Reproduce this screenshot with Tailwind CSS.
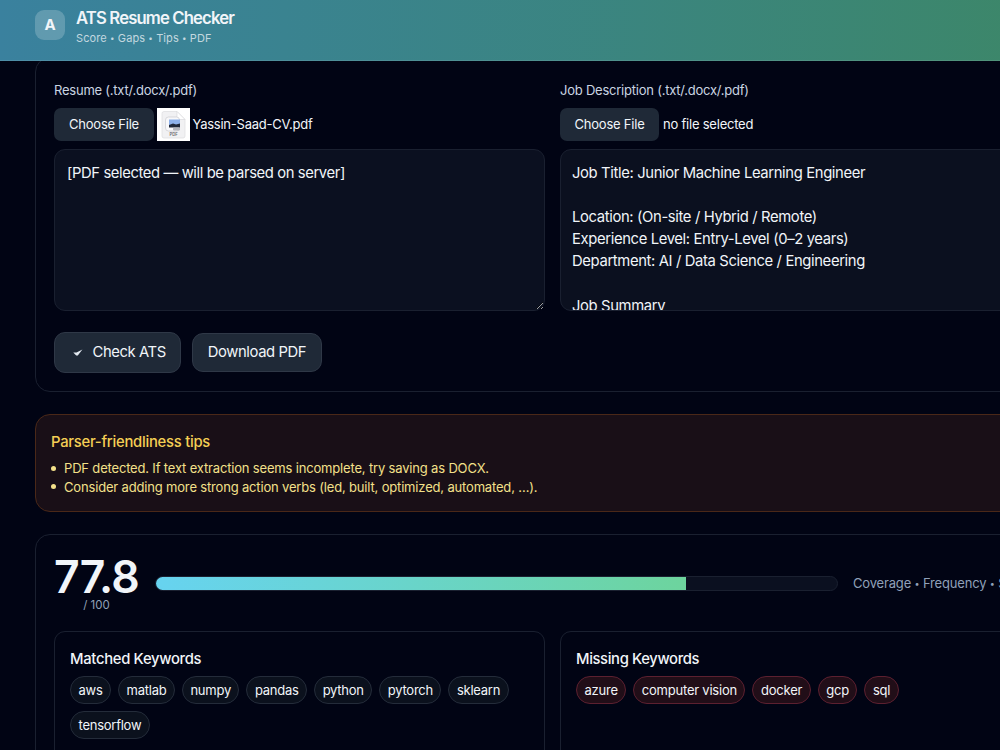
<!DOCTYPE html>
<html lang="en">
<head>
    <meta charset="UTF-8">
    <meta name="viewport" content="width=device-width, initial-scale=1.0">
    <title>ATS Resume Checker</title>
    <script src="https://cdn.jsdelivr.net/npm/@tailwindcss/browser@4"></script>
</head>
<body class="h-[750px] overflow-hidden bg-[#010414] font-['Inter','Liberation_Sans',sans-serif] text-slate-100">
    <!-- Header -->
    <header class="relative z-10 flex h-[61px] w-[1105px] items-start gap-[11px] border-b border-white/10 bg-linear-to-r from-[#3a819e] to-[#3d8765] pl-[35px]">
        <div class="mt-[10px] flex size-[30px] items-center justify-center rounded-[9px] bg-white/20 text-[15px] font-bold">A</div>
        <div class="pt-[7px]">
            <h1 class="text-[16.7px] leading-[22px] font-semibold tracking-[-0.86px]">ATS Resume Checker</h1>
            <p class="mt-[2px] text-[11px] leading-[15px] tracking-[0.1px] text-slate-100/75">Score <span class="align-[1px] text-[8px]">•</span> Gaps <span class="align-[1px] text-[8px]">•</span> Tips <span class="align-[1px] text-[8px]">•</span> PDF</p>
        </div>
    </header>

    <main class="-mt-[4px] ml-[35px] w-[1035px]">
        <!-- Inputs -->
        <section class="h-[335px] rounded-[15px] border border-[#1a2030] px-[18px] pt-[23px]">
            <div class="grid grid-cols-2 gap-[15px]">
                <div>
                    <label class="block text-[13px] leading-[18px] tracking-[-0.23px] text-slate-300">Resume (.txt/.docx/.pdf)</label>
                    <div class="mt-[9px] flex h-[33px] items-center text-[13px] tracking-[-0.24px]">
                        <button class="h-[33px] w-[100px] rounded-[7px] bg-[#1f2937]">Choose File</button>
                        <svg class="ml-[3px] size-[33px]" viewBox="0 0 33 33">
                            <rect width="33" height="33" fill="#fff"/>
                            <path d="M7 3.500h13l8 8v16.500q0 2-2 2H7q-2 0-2-2v-22.500q0-2 2-2z" fill="#f1f1f3" stroke="#dcdcdf" stroke-width=".7"/>
                            <path d="M20 3.500v6q0 2 2 2h6z" fill="#fff" stroke="#d5d5d8" stroke-width=".6"/>
                            <rect x="8.500" y="9" width="14" height="14" rx="3" fill="#f8f8fa" stroke="#c4c5ca" stroke-width=".6"/>
                            <rect x="12" y="11.500" width="11" height="7" fill="#8eb1ea"/>
                            <path d="M12 17l4-1.500 3 1 4-1v4H12z" fill="#20283a"/>
                            <rect x="16" y="19.500" width="7" height="3" rx="1.200" fill="#b4b5bc"/>
                            <text x="12.500" y="28.300" font-size="4.200" font-weight="600" fill="#66676c" letter-spacing="0">PDF</text>
                        </svg>
                        <span class="ml-[2.5px]">Yassin-Saad-CV.pdf</span>
                    </div>
                    <textarea class="mt-[8px] block h-[162px] w-full resize rounded-[11px] border border-[#1a2030] bg-[#0b1020] px-[12px] py-[11.5px] text-[14.8px] leading-[22.2px] tracking-[-0.4px]">[PDF selected — will be parsed on server]</textarea>
                </div>
                <div>
                    <label class="block text-[13px] leading-[18px] tracking-[-0.23px] text-slate-300">Job Description (.txt/.docx/.pdf)</label>
                    <div class="mt-[9px] flex h-[33px] items-center text-[13px] tracking-[-0.22px]">
                        <button class="h-[33px] w-[99px] rounded-[7px] bg-[#1f2937]">Choose File</button>
                        <span class="ml-[4px]">no file selected</span>
                    </div>
                    <div class="mt-[8px] h-[162px] overflow-hidden rounded-[11px] border border-[#1a2030] bg-[#0b101f] px-[11px] py-[11.5px] text-[14.8px] leading-[22.2px] tracking-[-0.36px] whitespace-pre-line">Job Title: Junior Machine Learning Engineer

                        Location: (On-site / Hybrid / Remote)
                        Experience Level: Entry-Level (0–2 years)
                        Department: AI / Data Science / Engineering

                        Job Summary</div>
                </div>
            </div>
            <div class="mt-[21px] flex items-center gap-[11px] text-[14.8px] tracking-[-0.4px]">
                <button class="flex h-[41px] w-[127px] items-center rounded-[11px] border border-[#2f3847] bg-[#1f2937] pl-[18px]">
                    <svg class="mr-[9.5px] h-[8px] w-[10px]" viewBox="0 0 10 8"><path d="M.3 3.500l3.200.1L9.400.6 4.800 6.600H3.200z" fill="#e2e8f0"/></svg>
                    Check ATS
                </button>
                <button class="h-[39px] w-[130px] rounded-[11px] border border-[#2f3847] bg-[#1f2937]">Download PDF</button>
            </div>
        </section>

        <!-- Tips -->
        <section class="mt-[22px] h-[98px] rounded-[15px] border border-[#4a2818] bg-[#190f17] px-[15px] pt-[16px]">
            <h2 class="text-[14.8px] leading-[22px] font-medium tracking-[-0.25px] text-[#f5cf55]">Parser-friendliness tips</h2>
            <ul class="mt-[6px] text-[13px] leading-[18.500px] tracking-[-0.17px] text-[#f3e08a]">
                <li class="flex items-center gap-[8px] before:size-[5px] before:rounded-full before:bg-current">PDF detected. If text extraction seems incomplete, try saving as DOCX.</li>
                <li class="flex items-center gap-[8px] before:size-[5px] before:rounded-full before:bg-current">Consider adding more strong action verbs (led, built, optimized, automated, …).</li>
            </ul>
        </section>

        <!-- Score -->
        <section class="mt-[22px] h-[300px] rounded-[15px] border border-[#1a2030] px-[18px] pt-[20px]">
            <div class="flex h-[58px] items-center">
                <div class="w-[84px] shrink-0 text-center">
                    <div class="text-[44.5px] leading-[42px] font-semibold tracking-[-0.8px]">77.8</div>
                    <div class="pl-[1px] text-[11.5px] leading-[14px] text-slate-400">/ 100</div>
                </div>
                <div class="-mt-[2px] ml-[17px] h-[15px] w-[683px] shrink-0 overflow-hidden rounded-full border border-[#1a2030] bg-[#0b1020]">
                    <div class="h-full bg-linear-to-r from-[#67d3f0] to-[#6dd49d]" style="width: 77.8%"></div>
                </div>
                <span class="ml-[15px] text-[13px] tracking-[-0.17px] whitespace-nowrap text-slate-400">Coverage <span class="align-[1px] text-[9px]">•</span> Frequency <span class="align-[1px] text-[9px]">•</span> Strength</span>
            </div>
            <div class="mt-[18px] grid grid-cols-2 gap-[15px]">
                <div class="h-[150px] rounded-[11px] border border-[#1a2030] px-[15px] pt-[16px]">
                    <h3 class="text-[14.8px] leading-[22px] font-medium tracking-[-0.3px]">Matched Keywords</h3>
                    <div class="mt-[6px] flex flex-wrap gap-x-[7px] gap-y-[7.400px] text-[13px] leading-[18px] tracking-[-0.25px]">
                        <span class="rounded-full border border-[#242c3a] bg-[#0b111d] px-[7.5px] py-[4px]">aws</span>
                        <span class="rounded-full border border-[#242c3a] bg-[#0b111d] px-[7.5px] py-[4px]">matlab</span>
                        <span class="rounded-full border border-[#242c3a] bg-[#0b111d] px-[7.5px] py-[4px]">numpy</span>
                        <span class="rounded-full border border-[#242c3a] bg-[#0b111d] px-[7.5px] py-[4px]">pandas</span>
                        <span class="rounded-full border border-[#242c3a] bg-[#0b111d] px-[7.5px] py-[4px]">python</span>
                        <span class="rounded-full border border-[#242c3a] bg-[#0b111d] px-[7.5px] py-[4px]">pytorch</span>
                        <span class="rounded-full border border-[#242c3a] bg-[#0b111d] px-[7.5px] py-[4px]">sklearn</span>
                        <span class="rounded-full border border-[#242c3a] bg-[#0b111d] px-[7.5px] py-[4px]">tensorflow</span>
                    </div>
                </div>
                <div class="h-[150px] rounded-[11px] border border-[#1a2030] px-[15px] pt-[16px]">
                    <h3 class="text-[14.8px] leading-[22px] font-medium tracking-[-0.36px]">Missing Keywords</h3>
                    <div class="mt-[6px] flex flex-wrap gap-x-[7px] gap-y-[7.400px] text-[13px] leading-[18px] tracking-[-0.22px]">
                        <span class="rounded-full border border-[#5c2030] bg-[#210e18] px-[7.5px] py-[4px]">azure</span>
                        <span class="rounded-full border border-[#5c2030] bg-[#210e18] px-[7.5px] py-[4px]">computer vision</span>
                        <span class="rounded-full border border-[#5c2030] bg-[#210e18] px-[7.5px] py-[4px]">docker</span>
                        <span class="rounded-full border border-[#5c2030] bg-[#210e18] px-[7.5px] py-[4px]">gcp</span>
                        <span class="rounded-full border border-[#5c2030] bg-[#210e18] px-[7.5px] py-[4px]">sql</span>
                    </div>
                </div>
            </div>
        </section>
    </main>
</body>
</html>
